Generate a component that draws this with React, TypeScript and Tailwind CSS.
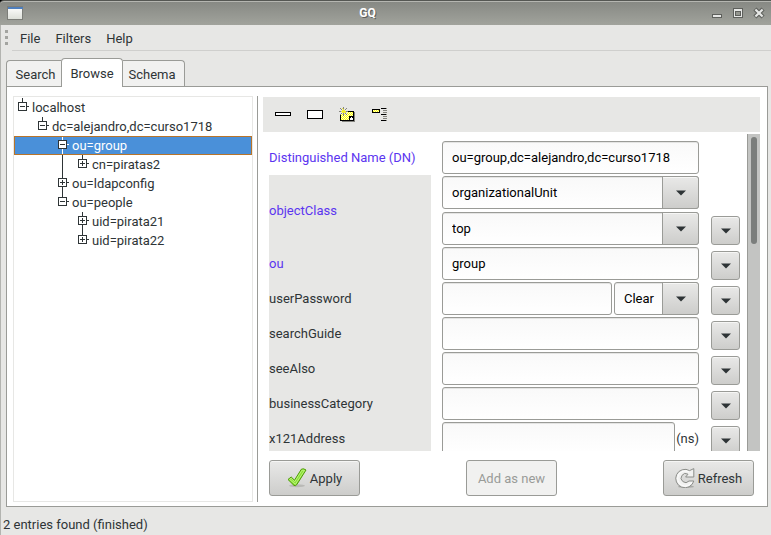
import type { ReactNode } from 'react';

type Node = {
  name: string;
  level: number;
  open: boolean;
  last: boolean;
  rails: number[];
  selected?: boolean;
};

const nodes: Node[] = [
  { name: 'localhost', level: 0, open: true, last: true, rails: [] },
  { name: 'dc=alejandro,dc=curso1718', level: 1, open: true, last: true, rails: [] },
  { name: 'ou=group', level: 2, open: true, last: false, rails: [], selected: true },
  { name: 'cn=piratas2', level: 3, open: false, last: true, rails: [2] },
  { name: 'ou=ldapconfig', level: 2, open: false, last: false, rails: [] },
  { name: 'ou=people', level: 2, open: true, last: true, rails: [] },
  { name: 'uid=pirata21', level: 3, open: false, last: false, rails: [] },
  { name: 'uid=pirata22', level: 3, open: false, last: true, rails: [] },
];

function Branch({ node }: { node: Node }) {
  const x = node.level * 20;
  const line = node.selected ? '#ffffff' : '#2e3436';
  const width = x + 18;
  return (
    <svg width={width} height="19" viewBox={`0 0 ${width} 19`} shapeRendering="crispEdges" aria-hidden="true" className="shrink-0">
      {node.rails.map((r) => (
        <rect key={r} x={r * 20 + 8} y="0" width="1" height="19" fill="#2e3436" />
      ))}
      <rect x={x + 8} y="0" width="1" height="4" fill={line} />
      {!node.last && <rect x={x + 8} y="13" width="1" height="6" fill={line} />}
      <rect x={x + 13} y="8" width="2" height="1" fill={line} />
      <rect x={x + 4.5} y="4.5" width="8" height="8" fill="#fff" stroke="#2e3436" />
      <rect x={x + 6} y="8" width="5" height="1" fill="#2e3436" />
      {!node.open && <rect x={x + 8} y="6" width="1" height="5" fill="#2e3436" />}
    </svg>
  );
}

function Tree() {
  return (
    <div role="tree" aria-label="Directory" className="w-60 shrink-0 border border-[#e7e7e5] pt-px text-[#2e3436]">
      {nodes.map((n) => (
        <div
          key={n.name}
          role="treeitem"
          aria-level={n.level + 1}
          aria-selected={!!n.selected}
          className={
            n.selected
              ? 'flex h-[19px] items-center bg-[#4a90d9] text-white outline outline-1 -outline-offset-1 outline-[#b8742a]'
              : 'flex h-[19px] items-center'
          }
        >
          <Branch node={n} />
          <span className="leading-[19px]">{n.name}</span>
        </div>
      ))}
    </div>
  );
}

const field =
  'h-[33px] w-full min-w-0 rounded-[3px] border border-[#9a9b97] bg-linear-to-b from-[#f9f9f9] to-white px-[9px] text-black shadow-[inset_0_1px_0_#e4e4e3] outline-none';
const raised = 'border border-[#9a9b97] bg-linear-to-b from-[#e9e9e8] to-[#cdcdcb] shadow-[inset_0_1px_0_#f6f6f5]';

function Arrow() {
  return (
    <svg width="10" height="6" viewBox="0 0 10 6" aria-hidden="true">
      <path d="M0 0.5H10L5 5.5Z" fill="#2e3436" />
    </svg>
  );
}

function Combo({ label, value }: { label: string; value: string }) {
  return (
    <div className="relative w-full">
      <select aria-label={label} className={`${field} appearance-none pr-10`} defaultValue={value}>
        <option>{value}</option>
      </select>
      <span className={`${raised} pointer-events-none absolute inset-y-0 right-0 flex w-[37px] items-center justify-center rounded-r-[3px]`}>
        <Arrow />
      </span>
    </div>
  );
}

function Row({ id, label, required, plain, children }: { id: string; label: string; required?: boolean; plain?: boolean; children: ReactNode }) {
  return (
    <div className="flex pr-[7px]">
      <div className={plain ? 'flex w-[162px] shrink-0 items-center' : 'flex w-[162px] shrink-0 items-center bg-[#e7e7e5]'}>
        <label htmlFor={id} className={required ? 'whitespace-nowrap text-[#5b35f0]' : 'whitespace-nowrap text-[#2e3436]'}>
          {label}
        </label>
      </div>
      <div className="ml-[11px] flex min-w-0 flex-1 flex-col gap-[3px] py-px">{children}</div>
      <div className="ml-3 flex w-[29px] shrink-0 items-end pb-px">
        {!plain && (
          <button type="button" aria-label={`${label} options`} className={`${raised} flex h-[29px] w-[29px] items-center justify-center rounded-[3px] pt-px`}>
            <Arrow />
          </button>
        )}
      </div>
    </div>
  );
}

function NewEntryIcon() {
  return (
    <svg width="16" height="16" viewBox="0 0 16 16" shapeRendering="crispEdges" aria-hidden="true">
      <defs>
        <pattern id="dither" width="2" height="2" patternUnits="userSpaceOnUse">
          <rect width="2" height="2" fill="#ffff00" />
          <path d="M0 0h1v1H0zM1 1h1v1H1z" fill="#ffffd0" />
        </pattern>
      </defs>
      <path d="M3 15H15V6H16V16H3Z" fill="#85857f" />
      <path d="M1.5 5.5H14.5V14.5H1.5Z" fill="url(#dither)" stroke="#000" />
      <path d="M10 10H14V14H10Z" fill="#000" />
      <path d="M11 12h1v-1h1v1h1v2h-3z" fill="#fff" />
      <g transform="translate(0 1)">
        <path d="M1 2h7v5H1z" fill="#e7e7e5" />
        <path d="M0 4h3v1H0zM6 4h3v1H6zM4 0h1v3H4zM4 6h1v3H4zM1 1h1v1H1zM2 2h1v1H2zM6 2h1v1H6zM7 1h1v1H7zM2 6h1v1H2zM1 7h1v1H1zM6 6h1v1H6zM7 7h1v1H7z" fill="#85857f" />
        <path d="M3 3h3v3H3zM4 2h1v1H4zM2 4h1v1H2zM6 4h1v1H6zM3 1h1v1H3zM6 5h1v1H6z" fill="#f0ec30" />
      </g>
    </svg>
  );
}

function SchemaIcon() {
  return (
    <svg width="16" height="16" viewBox="0 0 16 16" shapeRendering="crispEdges" aria-hidden="true">
      <rect x="1.5" y="3.5" width="7" height="3" fill="url(#dither)" stroke="#000" />
      <path d="M10 2h5v1h-5zM10 8h5v1h-5zM10 14h5v1h-5z" fill="#000" />
      <path d="M12 4h4v1h-4zM12 6h4v1h-4zM12 10h4v1h-4zM12 12h4v1h-4zM15 2h1v1h-1zM15 8h1v1h-1zM15 14h1v1h-1z" fill="#85857f" />
    </svg>
  );
}

function ApplyIcon() {
  return (
    <svg width="20" height="20" viewBox="0 0 20 20" aria-hidden="true">
      <ellipse cx="10" cy="17.8" rx="8" ry="1.5" fill="#b9b9b6" />
      <path d="M1 11.5L4.2 9L7.5 12.2L14.4 1.2Q16.5 0.1 19 2L9.8 16.6Q8.3 18.4 7 17.4Z" fill="#8ae234" stroke="#4e9a06" strokeLinejoin="round" />
      <path d="M2.6 11.4L4.1 10.3L7.7 13.8L15.1 2.1L17.5 2.4L8.4 16.2Z" fill="none" stroke="#c6f58e" strokeWidth="0.8" />
    </svg>
  );
}

function RefreshIcon() {
  return (
    <svg width="20" height="20" viewBox="0 0 20 20" aria-hidden="true">
      <ellipse cx="11" cy="18.7" rx="8" ry="1.2" fill="#a9aaa7" />
      <path d="M14.6 2.6L18.8 0.6V9H10.6L13 6.2A4.5 4.5 0 1 0 14 13H18.8A9.2 9.2 0 1 1 14.6 2.6Z" fill="#f1f1f0" stroke="#8b8d89" strokeLinejoin="round" />
      <path d="M13.9 3.8A7.6 7.6 0 1 0 17 14" fill="none" stroke="#fff" strokeWidth="0.8" />
    </svg>
  );
}

export default function App() {
  const tool = 'flex h-4 w-4 items-center justify-center';
  const action = 'flex h-9 w-[91px] items-center justify-center gap-[3px] rounded-[3px] whitespace-nowrap';
  return (
    <div className="flex h-screen flex-col overflow-hidden bg-black font-['Roboto','Noto_Sans',sans-serif] text-[13px] leading-[19px] text-[#2e3436]">
      <header className="flex h-[25px] shrink-0 items-center rounded-tl-[4px] border-t border-[#555753] bg-linear-to-b from-[#868883] to-[#a1a39c] pr-[6px] pl-[7px] shadow-[inset_0_1px_0_#b5b6b1]">
        <svg width="17" height="15" viewBox="0 0 17 15" aria-hidden="true">
          <defs>
            <linearGradient id="win" x1="0" y1="0" x2="0" y2="1">
              <stop offset="0" stopColor="#fff" />
              <stop offset="1" stopColor="#dcdfd8" />
            </linearGradient>
          </defs>
          <rect x="0.5" y="0.5" width="15" height="13" fill="url(#win)" stroke="#7c7e79" />
          <rect x="1" y="1" width="15" height="2" fill="#4f7fbd" />
        </svg>
        <h1 className="flex-1 text-center text-[12px] font-bold text-white [text-shadow:1px_1px_0_#5c5e5a]">GQ</h1>
        <div className="flex gap-[9px]">
          <button type="button" aria-label="Minimize">
            <svg width="12" height="12" viewBox="0 0 12 12" shapeRendering="crispEdges">
              <rect x="1.5" y="7.5" width="9" height="3" fill="#e6e7e5" stroke="#5e605c" />
            </svg>
          </button>
          <button type="button" aria-label="Maximize">
            <svg width="12" height="12" viewBox="0 0 12 12" shapeRendering="crispEdges">
              <rect x="1.5" y="1.5" width="9" height="9" fill="#e6e7e5" stroke="#5e605c" />
              <rect x="3.5" y="4.5" width="5" height="4" fill="#94968f" stroke="#5e605c" />
            </svg>
          </button>
          <button type="button" aria-label="Close">
            <svg width="12" height="12" viewBox="0 0 12 12">
              <path d="M3.5 3.5L8.5 8.5M8.5 3.5L3.5 8.5" stroke="#5e605c" strokeWidth="4.4" strokeLinecap="square" />
              <path d="M3.2 3.2L8.8 8.8M8.8 3.2L3.2 8.8" stroke="#e6e7e5" strokeWidth="2.2" strokeLinecap="square" />
            </svg>
          </button>
        </div>
      </header>

      <div className="flex min-h-0 flex-1 flex-col border-l border-[#b3b4b0] bg-[#e7e7e5]">
        <nav className="flex h-[26px] shrink-0 items-stretch pl-1">
          <div aria-hidden="true" className="flex w-[7px] flex-col gap-[3px] pt-[5px]">
            <span className="h-[3px] w-[3px] bg-[#a3a4a0]" />
            <span className="h-[3px] w-[3px] bg-[#a3a4a0]" />
            <span className="h-[3px] w-[3px] bg-[#a3a4a0]" />
          </div>
          <div className="flex flex-1 items-center gap-[15px] border-b border-[#cfcfcd] pt-[2px] pl-2">
            <button type="button">File</button>
            <button type="button">Filters</button>
            <button type="button">Help</button>
          </div>
        </nav>

        <main className="flex min-h-0 flex-1 flex-col pt-[7px] pr-[3px] pl-[5px]">
          <div role="tablist" className="flex h-7 shrink-0 items-end">
            <button type="button" role="tab" aria-selected="false" className="h-[26px] w-[55px] rounded-tl-[4px] border border-r-0 border-b-0 border-[#9a9b97] bg-[#f1f1f0] pt-px pl-[3px]">
              Search
            </button>
            <button type="button" role="tab" aria-selected="true" className="z-10 -mb-px h-[29px] w-[62px] rounded-t-[4px] border border-b-0 border-[#9a9b97] bg-white">
              Browse
            </button>
            <button type="button" role="tab" aria-selected="false" className="h-[26px] w-[62px] rounded-tr-[4px] border border-b-0 border-l-0 border-[#9a9b97] bg-[#f1f1f0] pt-px pr-[3px]">
              Schema
            </button>
          </div>

          <section className="flex min-h-0 flex-1 border border-[#9a9b97] bg-white pt-[9px] pr-[7px] pb-1 pl-[6px]">
            <Tree />
            <div className="ml-1 w-px shrink-0 bg-[#9a9b97]" />
            <div className="ml-[5px] flex min-w-0 flex-1 flex-col pt-px">
              <div role="toolbar" aria-label="Entry" className="flex h-[35px] shrink-0 items-center gap-4 bg-[#e7e7e5] pb-px pl-3">
                <button type="button" aria-label="Collapse" className={tool}>
                  <span className="h-1 w-4 border border-black bg-white" />
                </button>
                <button type="button" aria-label="Expand" className={tool}>
                  <span className="h-[9px] w-4 border border-black bg-white" />
                </button>
                <button type="button" aria-label="New entry" className={tool}>
                  <NewEntryIcon />
                </button>
                <button type="button" aria-label="Show schema" className={tool}>
                  <SchemaIcon />
                </button>
              </div>

              <div className="flex min-h-0 flex-1">
                <form className="min-w-0 flex-1 overflow-y-auto pt-2 pl-[6px] [scrollbar-width:none]">
                  <Row id="dn" label="Distinguished Name (DN)" required plain>
                    <input id="dn" className={field} defaultValue="ou=group,dc=alejandro,dc=curso1718" />
                  </Row>
                  <Row id="objectClass" label="objectClass" required>
                    <Combo label="objectClass 1" value="organizationalUnit" />
                    <Combo label="objectClass 2" value="top" />
                  </Row>
                  <Row id="ou" label="ou" required>
                    <input id="ou" className={field} defaultValue="group" />
                  </Row>
                  <Row id="userPassword" label="userPassword">
                    <div className="flex gap-[2px]">
                      <input id="userPassword" className={field} />
                      <div className="w-[85px] shrink-0">
                        <Combo label="Encryption" value="Clear" />
                      </div>
                    </div>
                  </Row>
                  <Row id="searchGuide" label="searchGuide">
                    <input id="searchGuide" className={field} />
                  </Row>
                  <Row id="seeAlso" label="seeAlso">
                    <input id="seeAlso" className={field} />
                  </Row>
                  <Row id="businessCategory" label="businessCategory">
                    <input id="businessCategory" className={field} />
                  </Row>
                  <Row id="x121Address" label="x121Address">
                    <div className="flex items-center gap-px">
                      <input id="x121Address" className={field} />
                      <span>(ns)</span>
                    </div>
                  </Row>
                </form>
                <div aria-hidden="true" className="mt-[2px] w-[13px] shrink-0 border-l border-[#9a9b97] bg-[#c3c4c2] pt-[3px] pl-[3px]">
                  <div className="h-[107px] w-[6px] rounded-full bg-[#7b7e7c]" />
                </div>
              </div>

              <div className="flex shrink-0 justify-between pt-[9px] pr-[6px] pb-[6px] pl-[6px]">
                <button type="button" className={`${raised} ${action}`}>
                  <ApplyIcon />
                  Apply
                </button>
                <button type="button" disabled className={`${action} border border-[#9a9b97] bg-[#f1f1f0] text-[#999b98]`}>
                  Add as new
                </button>
                <button type="button" className={`${raised} ${action}`}>
                  <RefreshIcon />
                  Refresh
                </button>
              </div>
            </div>
          </section>
        </main>

        <footer className="flex h-7 shrink-0 items-center pt-[6px] pl-[2px]">2 entries found (finished)</footer>
      </div>
    </div>
  );
}
